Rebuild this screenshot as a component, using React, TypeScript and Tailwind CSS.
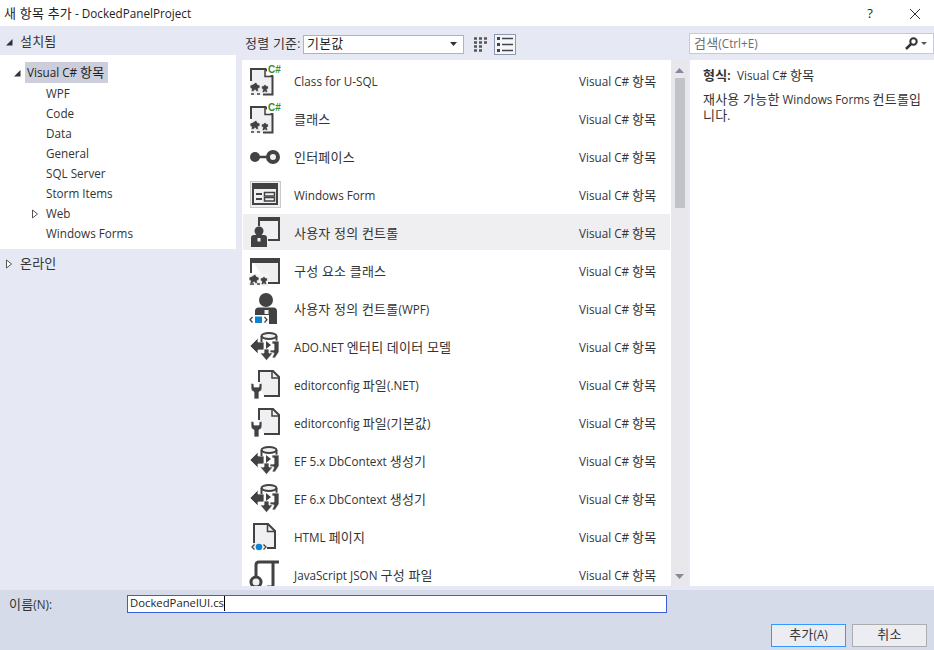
import { ReactNode } from 'react';

const dark = '#424242';
const pale = '#f0eff1';
const halo = '#f6f6f6';

// hangul runs render a bit larger than latin in the original dialog font
function Ko({ text }: { text: string }) {
    return (
        <>
            {text.split(/([\uac00-\ud7a3]+(?: [\uac00-\ud7a3]+)*)/).map((part, i) =>
                i % 2 === 1 ? <span key={i} className="text-[13px] leading-none tracking-[0.2px]">{part}</span> : part
            )}
        </>
    );
}

function Icon({ children }: { children: ReactNode }) {
    return (
        <svg width="32" height="32" viewBox="0 0 32 32" className="shrink-0 overflow-hidden">
            {children}
        </svg>
    );
}

// small pair of gears used by the class and component icons
function Gears({ x, y }: { x: number; y: number }) {
    return (
        <g transform={`translate(${x} ${y}) scale(1.250)`} fill={dark} stroke={halo} strokeWidth="0.600">
            <path d="M5 0l1 2 2 .5v2.200l-1.500.6.4 2.200H5.200L4 6.200 2.800 7.500H.8l.4-2.200L0 4.700V2.500l2-.5z" />
            <path d="M12 1.500l1 1.500 1.800.2v2l-1.300.8.8 1.800-1.600 1-.7-1.300-.8 1.300-1.600-1 .8-1.800-1.300-.8v-2L10.900 3z" />
        </g>
    );
}

function ClassIcon() {
    return (
        <Icon>
            <path d="M2 5h15l7 7v19H2z" fill={pale} />
            <path d="M2 17V5h14.500l7 7v18.500H14" fill="none" stroke={dark} strokeWidth="2" />
            <path d="M16 5v7.500h7.500" fill="none" stroke={dark} strokeWidth="1.500" />
            <Gears x={1} y={18} />
            <path d="M2 30h3M8 30h3" stroke={dark} strokeWidth="1.500" />
            <rect x="18" y="0" width="14" height="11" fill="#fff" />
            <text x="19" y="9" fontSize="10" fontWeight="700" fill="#388a34" fontFamily="'Liberation Sans', sans-serif">C#</text>
        </Icon>
    );
}

function InterfaceIcon() {
    return (
        <Icon>
            <circle cx="6" cy="17" r="5" fill={dark} />
            <path d="M8 17h12" stroke={dark} strokeWidth="2.500" />
            <circle cx="24" cy="17" r="5" fill={pale} stroke={dark} strokeWidth="4" />
        </Icon>
    );
}

function FormIcon() {
    return (
        <Icon>
            <rect x="1.500" y="3.500" width="30" height="26" fill={pale} stroke="#c8c8c8" />
            <rect x="4" y="6" width="24" height="20" fill={pale} stroke={dark} strokeWidth="2" />
            <rect x="4" y="6" width="24" height="5" fill={dark} />
            <path d="M7 16h6M7 21h6" stroke={dark} strokeWidth="2" />
            <rect x="15.500" y="14.500" width="10" height="3.500" fill="none" stroke={dark} strokeWidth="1.500" />
            <rect x="15.500" y="19.500" width="10" height="3.500" fill="none" stroke={dark} strokeWidth="1.500" />
        </Icon>
    );
}

function UserControlIcon() {
    return (
        <Icon>
            <path d="M10 2h20v22H19" fill={pale} stroke={dark} strokeWidth="2" />
            <rect x="10" y="1" width="21" height="4" fill={dark} />
            <path d="M9 1h2v9H9z" fill={dark} />
            <circle cx="10" cy="15" r="4.500" fill={dark} />
            <path d="M2 31v-9c0-2 1-3 3-3h10c2 0 3 1 3 3v9z" fill={dark} />
            <rect x="8.500" y="22" width="3" height="3.500" fill={pale} />
        </Icon>
    );
}

function ComponentIcon() {
    return (
        <Icon>
            <path d="M2 5h28v24H18" fill={pale} stroke={dark} strokeWidth="2" />
            <path d="M2 4v15" stroke={dark} strokeWidth="2" />
            <rect x="1" y="4" width="30" height="5" fill={dark} />
            <rect x="0" y="20" width="19" height="12" fill={halo} />
            <Gears x={0} y={20} />
            <path d="M1 30h4M8 30h3" stroke={dark} strokeWidth="1.500" />
        </Icon>
    );
}

function WpfIcon() {
    return (
        <Icon>
            <circle cx="17" cy="8" r="7" fill={dark} />
            <path d="M6 23v-4c0-2 1.500-3.500 3.500-3.500h15c2 0 3.500 1.500 3.500 3.500v13H6z" fill={dark} />
            <rect x="15.500" y="18" width="4" height="4" fill={pale} />
            <rect x="0" y="23" width="20" height="9" fill="#fff" />
            <rect x="6" y="24.500" width="7" height="6.500" fill="#0a84d0" />
            <path d="M3.500 25L1 27.800l2.500 2.700M15.500 25l2.500 2.800-2.500 2.700" fill="none" stroke={dark} strokeWidth="1.300" />
        </Icon>
    );
}

function AdoIcon() {
    return (
        <Icon>
            <path d="M1 16l8-8v4h6v8H9v4z" fill={dark} stroke={halo} strokeWidth="0.800" />
            <ellipse cx="20" cy="6" rx="7.500" ry="3" fill={pale} stroke={dark} strokeWidth="2" />
            <path d="M12.500 6v6M27.500 6v5" stroke={dark} strokeWidth="2" />
            <path d="M23 11h7v11l-4 6h-3l2-5h-4v-3h4v-6h-2z" fill={dark} stroke={halo} strokeWidth="0.800" />
            <path d="M15 19h5v4h4l-6.500 7.500L11 23h4z" fill={dark} stroke={halo} strokeWidth="0.800" />
            <path d="M17 11l5 4-5 4z" fill={dark} />
        </Icon>
    );
}

function ConfigIcon() {
    return (
        <Icon>
            <path d="M10 14V3h14l6 6v19H15" fill={pale} stroke={dark} strokeWidth="2" />
            <path d="M23 3.500v6.500h7" fill="none" stroke={dark} strokeWidth="1.500" />
            <path d="M2 15v5c0 2 1 3 3 4v7h5v-7c2-1 3-2 3-4v-5l-3 1v3H5v-3z" fill={dark} stroke={halo} strokeWidth="0.800" />
        </Icon>
    );
}

function HtmlIcon() {
    return (
        <Icon>
            <path d="M4 4h15l7 7v17H4z" fill={pale} />
            <path d="M5 23V4h14l7 7v17h-8" fill="none" stroke={dark} strokeWidth="2" />
            <path d="M18.500 4v7.500H26" fill="none" stroke={dark} strokeWidth="1.500" />
            <circle cx="10" cy="27" r="3.300" fill="#0a84d0" />
            <path d="M5.500 24.500L3 27l2.500 2.500M14.500 24.500L17 27l-2.500 2.500" fill="none" stroke={dark} strokeWidth="1.300" />
        </Icon>
    );
}

function JsonIcon() {
    return (
        <Icon>
            <path d="M7 18V7c0-2 1-3 3-3h20" fill="none" stroke={dark} strokeWidth="3" />
            <path d="M24 5v22c0 1-1 2-2 2h-4" fill="none" stroke={dark} strokeWidth="3" />
            <circle cx="7" cy="24" r="5" fill={pale} stroke={dark} strokeWidth="3" />
        </Icon>
    );
}

const items = [
    { name: 'Class for U-SQL', icon: <ClassIcon /> },
    { name: '클래스', icon: <ClassIcon /> },
    { name: '인터페이스', icon: <InterfaceIcon /> },
    { name: 'Windows Form', icon: <FormIcon /> },
    { name: '사용자 정의 컨트롤', icon: <UserControlIcon />, selected: true },
    { name: '구성 요소 클래스', icon: <ComponentIcon /> },
    { name: '사용자 정의 컨트롤(WPF)', icon: <WpfIcon /> },
    { name: 'ADO.NET 엔터티 데이터 모델', icon: <AdoIcon /> },
    { name: 'editorconfig 파일(.NET)', icon: <ConfigIcon /> },
    { name: 'editorconfig 파일(기본값)', icon: <ConfigIcon /> },
    { name: 'EF 5.x DbContext 생성기', icon: <AdoIcon /> },
    { name: 'EF 6.x DbContext 생성기', icon: <AdoIcon /> },
    { name: 'HTML 페이지', icon: <HtmlIcon /> },
    { name: 'JavaScript JSON 구성 파일', icon: <JsonIcon /> },
];

const treeItems = ['WPF', 'Code', 'Data', 'General', 'SQL Server', 'Storm Items', 'Web', 'Windows Forms'];

function Expanded() {
    return (
        <svg width="8" height="8" viewBox="0 0 8 8" className="shrink-0">
            <path d="M7.500 1v6.500H1z" fill="#333" />
        </svg>
    );
}

function Collapsed() {
    return (
        <svg width="8" height="10" viewBox="0 0 8 10" className="shrink-0">
            <path d="M1.500 1l5 4-5 4z" fill="#fff" stroke="#555" />
        </svg>
    );
}

export default function App() {
    return (
        <div className="w-[934px] h-[650px] flex flex-col overflow-hidden bg-[#e6e9f4] text-[11.7px] text-[#1e1e1e] font-['Open_Sans','Noto_Sans_CJK_KR',sans-serif]">
            <header className="h-[26px] shrink-0 bg-white flex items-center pl-[4px] pt-px">
                <span className="flex-1"><Ko text="새 항목 추가 - DockedPanelProject" /></span>
                <span className="w-[12px] text-[13px] text-center">?</span>
                <svg width="12" height="12" viewBox="0 0 12 12" className="ml-[33px] mr-[13px]">
                    <path d="M1 1l10 10M11 1L1 11" stroke="#333" strokeWidth="1" />
                </svg>
            </header>

            <div className="flex-1 min-h-0 flex pb-[4px]">
                {/* tree */}
                <aside className="w-[236px] shrink-0 flex flex-col">
                    <div className="h-[29px] shrink-0 flex items-center pl-[5px] pt-[2px] gap-[7px] text-[#333]">
                        <Expanded />
                        <span><Ko text="설치됨" /></span>
                    </div>
                    <div className="h-[194px] shrink-0 bg-white pt-[7px]">
                        <div className="h-[21px] flex items-center pl-[13px]">
                            <Expanded />
                            <span className="ml-[4px] h-[21px] w-[83px] pl-[2px] flex items-center gap-[3px] whitespace-nowrap bg-[#cccedb]">
                                Visual C# <Ko text="항목" />
                            </span>
                        </div>
                        {treeItems.map((item) => (
                            <div key={item} className="h-[20px] flex items-center pl-[31px] pt-px text-[#333]">
                                <span className="w-[15px]">{item === 'Web' && <Collapsed />}</span>
                                <span>{item}</span>
                            </div>
                        ))}
                    </div>
                    <div className="h-[28px] shrink-0 flex items-center pl-[5px] pt-px gap-[7px] text-[#333]">
                        <Collapsed />
                        <span><Ko text="온라인" /></span>
                    </div>
                </aside>

                {/* template list */}
                <main className="w-[453px] shrink-0 flex flex-col">
                    <div className="h-[34px] shrink-0 flex items-center pl-[9px] pt-[2px]">
                        <span className="w-[58px] text-[#333] whitespace-nowrap"><Ko text="정렬 기준:" /></span>
                        <div className="w-[161px] h-[19px] bg-white border border-[#a9b4cc] flex items-center justify-between pl-[3px] pr-[6px]">
                            <span><Ko text="기본값" /></span>
                            <svg width="7" height="4" viewBox="0 0 7 4">
                                <path d="M0 0h7L3.500 4z" fill="#333" />
                            </svg>
                        </div>
                        <svg width="15" height="15" viewBox="0 0 15 15" className="ml-[9px]">
                            <path d="M1 1.500h3M6 1.500h3M11 1.500h3M1 5.500h3M6 5.500h3M11 5.500h3" stroke="#555" strokeWidth="2.500" />
                            <path d="M1 9.500h3M6 9.500h3M1 13.500h3M6 13.500h3" stroke="#555" strokeWidth="2.500" />
                        </svg>
                        <div className="ml-[6px] w-[22px] h-[21px] bg-[#f5f6fa] border border-[#8d97ad] flex items-center justify-center">
                            <svg width="16" height="15" viewBox="0 0 16 15">
                                <path d="M0 1.500h3M0 7.500h3M0 13.500h3" stroke="#444" strokeWidth="3" />
                                <path d="M5 1.500h11M5 7.500h11M5 13.500h11" stroke="#444" strokeWidth="1.500" />
                            </svg>
                        </div>
                    </div>
                    <div className="flex-1 min-h-0 flex">
                        <ul className="ml-[6px] w-[429px] shrink-0 bg-white overflow-hidden pt-px">
                            {items.map((item) => (
                                <li key={item.name} className="h-[38px] py-px px-px">
                                    <div className={`h-[36px] flex items-center pl-[6px] text-[#333] whitespace-nowrap ${item.selected ? 'bg-[#efeff2]' : ''}`}>
                                        {item.icon}
                                        <span className="ml-[13px] flex-1 pt-[3px]"><Ko text={item.name} /></span>
                                        <span className="w-[91px] pt-[3px]"><Ko text="Visual C# 항목" /></span>
                                    </div>
                                </li>
                            ))}
                        </ul>
                        <div className="w-[17px] shrink-0 bg-[#e8e8ec] flex flex-col items-center">
                            <svg width="9" height="5" viewBox="0 0 9 5" className="mt-[8px]">
                                <path d="M0 5h9L4.500 0z" fill="#86899a" />
                            </svg>
                            <div className="mt-[5px] w-[10px] h-[130px] bg-[#c2c3c9]" />
                            <svg width="9" height="5" viewBox="0 0 9 5" className="mt-auto mb-[7px]">
                                <path d="M0 0h9L4.500 5z" fill="#86899a" />
                            </svg>
                        </div>
                    </div>
                </main>

                {/* description */}
                <section className="flex-1 min-w-0 flex flex-col">
                    <div className="h-[34px] shrink-0 pt-[7px]">
                        <div className="h-[21px] bg-white border border-[#c6cbd9] flex items-center pl-[4px] pr-[6px] text-[#6d6d6d]">
                            <span className="flex-1 pt-px"><Ko text="검색(Ctrl+E)" /></span>
                            <svg width="13" height="13" viewBox="0 0 13 13">
                                <circle cx="8.500" cy="4.500" r="3.200" fill="none" stroke="#333" strokeWidth="2" />
                                <path d="M6 7l-5 5" stroke="#333" strokeWidth="2.500" />
                            </svg>
                            <svg width="6" height="3" viewBox="0 0 6 3" className="ml-[3px]">
                                <path d="M0 0h6L3 3z" fill="#555" />
                            </svg>
                        </div>
                    </div>
                    <div className="flex-1 ml-px bg-white pl-[13px] pr-[12px] pt-[7px] text-[#333]">
                        <div className="h-[18px] flex items-center">
                            <span className="w-[34px] font-bold whitespace-nowrap"><Ko text="형식:" /></span>
                            <span><Ko text="Visual C# 항목" /></span>
                        </div>
                        <p className="mt-[6px] leading-[16px]"><Ko text="재사용 가능한 Windows Forms 컨트롤입니다." /></p>
                    </div>
                </section>
            </div>

            <footer className="h-[60px] shrink-0 bg-[#d6dbe9] flex flex-col">
                <div className="flex items-center pt-[4px] pl-[9px] text-[#333]">
                    <span className="w-[118px] pt-[2px]"><Ko text="이름(N):" /></span>
                    <div className="w-[540px] h-[18px] bg-white border border-[#3a5fd9] flex items-center pl-[2px] text-[#1e1e1e] text-[11.3px]">
                        <span>DockedPanelUI.cs</span>
                        <span className="w-px h-[15px] bg-black" />
                    </div>
                </div>
                <div className="flex justify-end gap-[6px] pr-[7px] mt-[10px]">
                    <button className="w-[75px] h-[23px] bg-[#ecedf2] border border-[#3399ff] text-[#333]"><Ko text="추가(A)" /></button>
                    <button className="w-[75px] h-[23px] bg-[#ecedf2] border border-[#adadad] text-[#333]"><Ko text="취소" /></button>
                </div>
            </footer>
        </div>
    );
}
